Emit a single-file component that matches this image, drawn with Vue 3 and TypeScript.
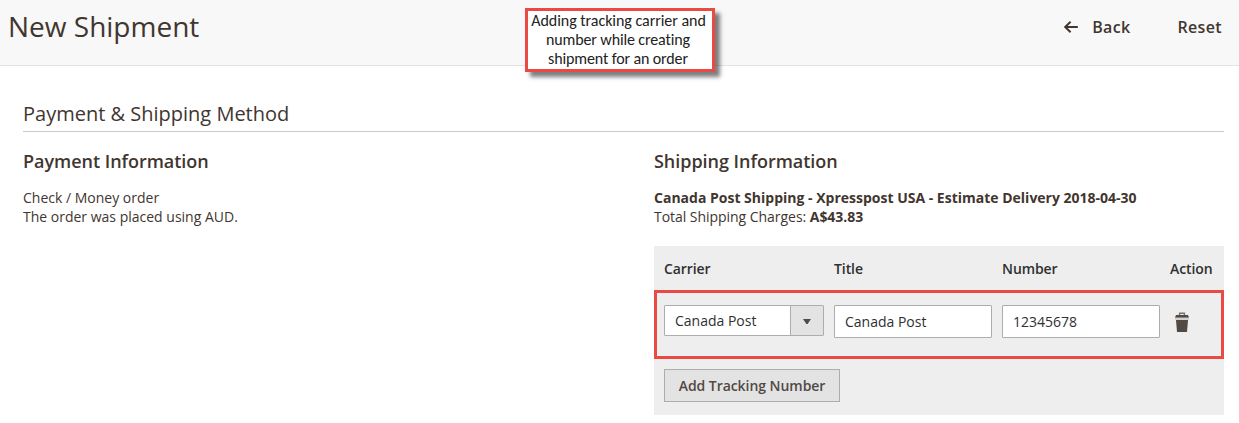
<script setup lang="ts">
import { ref } from 'vue'

interface Track {
  carrier: string
  title: string
  number: string
}

const columns: string[] = ['Carrier', 'Title', 'Number', 'Action']
const track = ref<Track>({ carrier: 'Canada Post', title: 'Canada Post', number: '12345678' })
</script>

<template>
  <div class="page">
    <header class="header">
      <h1 class="title"><span>New Shipment</span></h1>
      <nav class="actions">
        <button class="link back" type="button">
          <svg class="arrow" width="14" height="12" viewBox="0 0 14 12">
            <path d="M13.8 6H1.2M6.6 .8L1.2 6l5.4 5.2" fill="none" stroke="#41362f" stroke-width="1.9" />
          </svg>
          <span>Back</span>
        </button>
        <button class="link" type="button"><span>Reset</span></button>
      </nav>
      <aside class="callout">
        <span class="lead">Adding tracking carrier and</span>
        <span>number while creating</span>
        <span>shipment for an order</span>
      </aside>
    </header>

    <main class="content">
      <h2 class="section-title"><span>Payment &amp; Shipping Method</span></h2>
      <div class="columns">
        <section class="payment">
          <h3 class="subtitle"><span>Payment Information</span></h3>
          <p class="text"><span>Check / Money order</span></p>
          <p class="text"><span>The order was placed using AUD.</span></p>
        </section>
        <section class="shipping">
          <h3 class="subtitle"><span>Shipping Information</span></h3>
          <p class="text"><b>Canada Post Shipping - Xpresspost USA - Estimate Delivery 2018-04-30</b></p>
          <p class="text charges">Total Shipping Charges: <b>A$43.83</b></p>
          <div class="tracking">
            <div class="grid head">
              <span v-for="column in columns" :key="column">{{ column }}</span>
            </div>
            <div class="grid row">
              <div class="select">
                <span class="value">{{ track.carrier }}</span>
                <span class="toggle">
                  <svg width="8" height="5" viewBox="0 0 8 5"><path d="M0 0h8L4.6 5H3.4z" fill="#514943" /></svg>
                </span>
              </div>
              <input v-model="track.title" class="field" type="text" />
              <input v-model="track.number" class="field" type="text" />
              <button class="delete" type="button" aria-label="Delete">
                <svg width="16" height="21" viewBox="0 0 16 21">
                  <path d="M5.6 3V1.2h4.8V3" fill="none" stroke="#77716d" stroke-width="1.4" />
                  <path d="M2 3h12l1 2.8H1z" fill="#514943" />
                  <path d="M2 7.9h12L13 20H3z" fill="#514943" />
                  <path d="M1 5.8h14v2.1H1z" fill="#d1cfcd" />
                </svg>
              </button>
            </div>
            <button class="add" type="button"><span>Add Tracking Number</span></button>
          </div>
        </section>
      </div>
    </main>
  </div>
</template>

<style>
body {
  margin: 0;
  background: #fff;
}
</style>

<style scoped>
.page {
  height: 423px;
  overflow: hidden;
  color: #41362f;
  font: 14px/19px 'Open Sans', sans-serif;
}
.page * {
  box-sizing: border-box;
}
h1, h2, h3, p {
  margin: 0;
}
button {
  padding: 0;
  border: 0;
  background: none;
  color: inherit;
  font: inherit;
}
.header {
  position: relative;
  display: flex;
  justify-content: space-between;
  height: 66px;
  padding: 7px 17px 0 8px;
  border-bottom: 1px solid #e3e3e3;
  background: #f8f8f8;
}
.title {
  font-size: 28px;
  font-weight: 400;
  line-height: 38px;
}
.actions {
  display: flex;
  gap: 47px;
  height: 40px;
}
.link {
  display: flex;
  align-items: center;
  font-size: 16px;
  font-weight: 600;
  letter-spacing: 0.35px;
}
.arrow {
  margin-right: 14px;
}
.callout {
  position: absolute;
  top: 8px;
  left: 525px;
  width: 190px;
  height: 64px;
  padding-right: 4px;
  border: 3px solid #e94b44;
  background: #fff;
  box-shadow: 5px 5px 4px rgba(0, 0, 0, 0.5);
  color: #222;
  font: 16px/19px Carlito, Lato, sans-serif;
  letter-spacing: -0.12px;
  text-align: center;
  white-space: nowrap;
}
.callout span {
  display: block;
}
.callout .lead {
  margin-right: -1px;
  letter-spacing: -0.04px;
}
.content {
  padding: 36px 15px 0 23px;
}
.section-title {
  height: 30px;
  border-bottom: 1px solid #cacaca;
  font-size: 20px;
  font-weight: 400;
  line-height: 24px;
}
.columns {
  display: grid;
  grid-template-columns: 631px 570px;
}
.subtitle {
  height: 56px;
  padding-top: 17px;
  font-size: 18px;
  font-weight: 600;
  line-height: 24px;
  letter-spacing: -0.03px;
}
.text {
  height: 19px;
  white-space: nowrap;
}
.shipping .charges {
  letter-spacing: -0.04px;
}
.tracking {
  height: 169px;
  margin-top: 20px;
  background: #eee;
}
.grid {
  display: grid;
  grid-template-columns: 160px 158px 158px 50px;
  column-gap: 10px;
}
.head {
  height: 44px;
  padding: 13px 10px 0;
  color: #303030;
  font-weight: 600;
  letter-spacing: -0.08px;
}
.row {
  align-items: start;
  height: 69px;
  padding: 12px 7px;
  border: 3px solid #e94b44;
}
.select {
  display: flex;
  height: 31px;
  border: 1px solid #adadad;
  border-radius: 1px;
  background: #fff;
  color: #303030;
}
.value {
  flex: 1;
  padding: 5px 0 0 10px;
}
.toggle {
  display: flex;
  align-items: center;
  justify-content: center;
  width: 33px;
  padding-top: 2px;
  border-left: 1px solid #adadad;
  background: #e3e3e3;
}
.field {
  width: 100%;
  height: 33px;
  padding: 0 10px;
  border: 1px solid #adadad;
  border-radius: 1px;
  background: #fff;
  color: #303030;
  font: inherit;
}
.delete {
  width: 16px;
  height: 21px;
  margin: 7px 0 0 4px;
}
.delete svg {
  display: block;
}
.add {
  width: 176px;
  height: 33px;
  margin: 10px 0 0 10px;
  border: 1px solid #adadad;
  background: #e3e3e3;
  color: #514943;
  font-weight: 600;
  letter-spacing: -0.05px;
}
</style>
